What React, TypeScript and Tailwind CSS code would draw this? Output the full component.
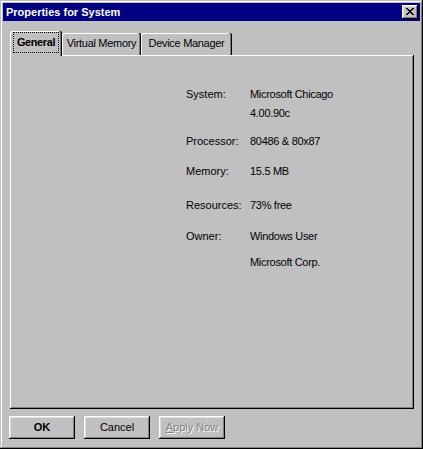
import React from "react"

const info = [
  { label: "System:", value: "Microsoft Chicago", mt: "mt-0" },
  { label: "", value: "4.00.90c", mt: "mt-[6px]" },
  { label: "Processor:", value: "80486 & 80x87", mt: "mt-[15px]" },
  { label: "Memory:", value: "15.5 MB", mt: "mt-[17px]" },
  { label: "Resources:", value: "73% free", mt: "mt-[21px]" },
  { label: "Owner:", value: "Windows User", mt: "mt-[18px]" },
  { label: "", value: "Microsoft Corp.", mt: "mt-[13px]" },
]

function CloseButton() {
  // 8x7 pixel X like the Win95 caption button
  const px = [
    [0, 0], [1, 0], [6, 0], [7, 0],
    [1, 1], [2, 1], [5, 1], [6, 1],
    [2, 2], [3, 2], [4, 2], [5, 2],
    [3, 3], [4, 3],
    [2, 4], [3, 4], [4, 4], [5, 4],
    [1, 5], [2, 5], [5, 5], [6, 5],
    [0, 6], [1, 6], [6, 6], [7, 6],
  ]
  return (
    <div className="flex h-[14px] w-[16px] items-center justify-center bg-[#c0c0c0] shadow-[inset_-1px_-1px_#000,inset_1px_1px_#fff,inset_-2px_-2px_#808080,inset_2px_2px_#dfdfdf]">
      <svg width="8" height="7" viewBox="0 0 8 7" shapeRendering="crispEdges" className="mb-[1px]">
        {px.map(([x, y]) => (
          <rect key={`${x}-${y}`} x={x} y={y} width="1" height="1" fill="#000" />
        ))}
      </svg>
    </div>
  )
}

function Tab({ label, selected, width }: { label: string; selected?: boolean; width: string }) {
  if (selected) {
    return (
      <div className={"relative z-10 -mb-[1px] flex h-[25px] shrink-0 items-start justify-center rounded-tl-[2px] rounded-tr-[2px] bg-[#c0c0c0] pt-[1px] shadow-[inset_-1px_0_#000,inset_-2px_0_#808080,inset_1px_1px_#fff] " + width}>
        <div className="flex h-[21px] w-[46px] items-center justify-center border border-dotted border-black">
          <span className="whitespace-nowrap text-[11px] font-bold tracking-[-0.4px]">{label}</span>
        </div>
      </div>
    )
  }
  return (
    <div className={"flex h-[22px] shrink-0 items-center justify-center rounded-tl-[2px] rounded-tr-[2px] bg-[#c0c0c0] pb-[1px] shadow-[inset_-1px_0_#000,inset_-2px_0_#808080,inset_1px_1px_#fff] " + width}>
      <span className="whitespace-nowrap text-[11px] tracking-[-0.3px]">{label}</span>
    </div>
  )
}

function Button({ children, bold, disabled }: { children: React.ReactNode; bold?: boolean; disabled?: boolean }) {
  return (
    <div
      className={
        "flex h-[23px] w-[66px] items-center justify-center bg-[#c0c0c0] text-[11px] shadow-[inset_-1px_-1px_#000,inset_1px_1px_#fff,inset_-2px_-2px_#808080,inset_2px_2px_#dfdfdf] " +
        (bold ? "font-bold " : "") +
        (disabled ? "text-[#808080] [text-shadow:1px_1px_0_#fff]" : "text-black")
      }
    >
      {children}
    </div>
  )
}

export default function App() {
  return (
    <div className="h-[449px] w-[423px] bg-[#c0c0c0] p-[3px] font-['Liberation_Sans',Arial,sans-serif] text-black shadow-[inset_-1px_-1px_#000,inset_1px_1px_#c0c0c0,inset_-2px_-2px_#808080,inset_2px_2px_#fff]">
      <div className="flex h-full flex-col">
        {/* title bar */}
        <div className="flex h-[18px] items-center justify-between bg-[#000080] pl-[3px] pr-[2px]">
          <span className="text-[11px] font-bold text-white">Properties for System</span>
          <CloseButton />
        </div>

        {/* tabs */}
        <div className="mt-[10px] flex items-end pl-[7px]">
          <Tab label="General" selected width="w-[52px]" />
          <Tab label="Virtual Memory" width="w-[79px]" />
          <Tab label="Device Manager" width="w-[91px]" />
        </div>

        {/* panel */}
        <div className="ml-[7px] mr-[6px] h-[354px] bg-[#c0c0c0] pl-[176px] pt-[33px] shadow-[inset_-1px_-1px_#000,inset_1px_1px_#fff,inset_-2px_-2px_#808080]">
          {info.map((row, i) => (
            <div key={i} className={"flex h-[13px] items-center text-[11px] leading-[13px] " + row.mt}>
              <span className="w-[64px]">{row.label}</span>
              <span className="tracking-[-0.3px]">{row.value}</span>
            </div>
          ))}
        </div>

        {/* buttons */}
        <div className="mt-[7px] flex gap-[9px] pl-[6px]">
          <Button bold>OK</Button>
          <Button>Cancel</Button>
          <Button disabled>
            <span>
              <span className="underline">A</span>pply Now
            </span>
          </Button>
        </div>
      </div>
    </div>
  )
}
